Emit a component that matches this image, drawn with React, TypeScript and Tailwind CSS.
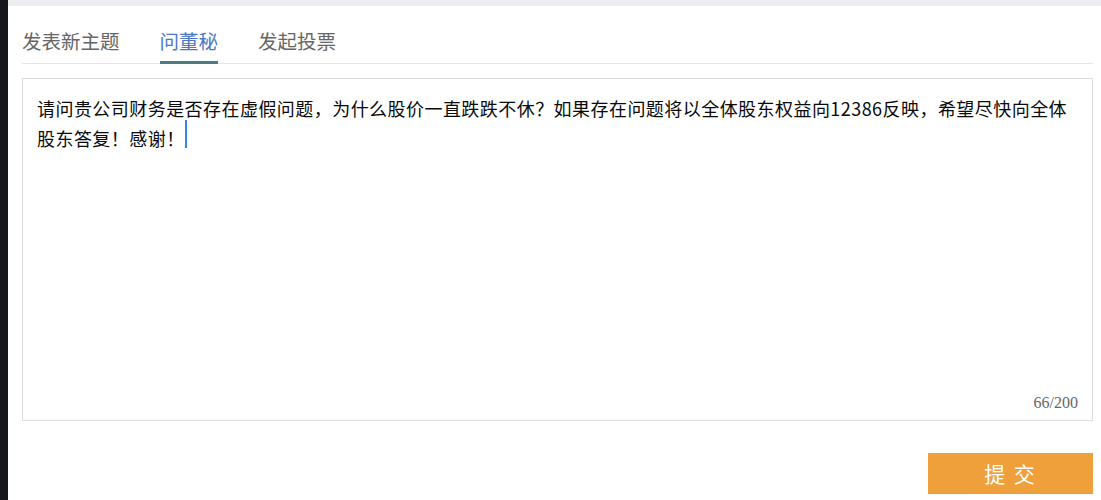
import React from "react";

export default function App() {
  const tabs = ["发表新主题", "问董秘", "发起投票"];
  return (
    <div className="flex h-[500px] w-full overflow-hidden bg-white">
      <div className="w-[8px] shrink-0 bg-[#15171a]" />
      <div className="flex flex-1 flex-col">
        <div className="h-[6px] bg-[#ececf1]" />
        <div className="flex flex-col pl-[14px] pr-[8px]">
          <div className="flex items-end gap-[40px] border-b border-[#e6e6e6] font-['Noto_Sans_CJK_SC',sans-serif] text-[19.5px]">
            {tabs.map((t, i) =>
              i === 1 ? (
                <div
                  key={t}
                  className="-mb-px border-b-[3px] border-[#4b7b87] pt-[20px] pb-[5px] leading-[30px] text-[#4a78c4]"
                >
                  {t}
                </div>
              ) : (
                <div key={t} className="pt-[20px] pb-[7px] leading-[30px] text-[#666666]">
                  {t}
                </div>
              )
            )}
          </div>
          <div className="mt-[14px] flex h-[343px] flex-col border border-[#dcdcdc] px-[14px] pt-[14px] pb-[8px]">
            <div className="flex-1 font-['Noto_Sans_CJK_SC',sans-serif] text-[18px] leading-[30px] tracking-[0.45px] text-[#0a0a0a]">
              请问贵公司财务是否存在虚假问题，为什么股价一直跌跌不休？如果存在问题将以全体股东权益向12386反映，希望尽快向全体股东答复！感谢！
              <span className="relative top-[-3px] inline-block h-[28px] w-[2px] bg-[#3a7ff6] align-top" />
            </div>
            <div className="text-right font-['Liberation_Serif',serif] text-[16px] leading-[18px] text-[#666666]">
              66/200
            </div>
          </div>
          <div className="mt-[32px] flex justify-end">
            <button className="flex h-[41px] w-[165px] items-center justify-center bg-[#f0a03a] font-['Noto_Sans_CJK_SC',sans-serif] text-[21px] tracking-[2px] text-white">
              提 交
            </button>
          </div>
        </div>
      </div>
    </div>
  );
}
